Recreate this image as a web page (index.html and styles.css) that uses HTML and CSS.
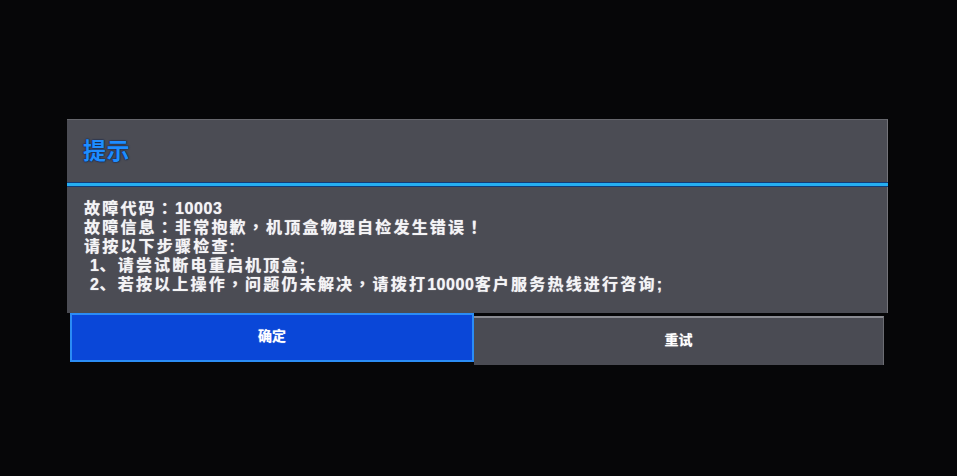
FILE: index.html
```html
<!DOCTYPE html>
<html lang="zh-CN">
<head>
<meta charset="utf-8">
<title>提示</title>
<link rel="stylesheet" href="styles.css">
</head>
<body>
<div class="dialog">
  <div class="title">提示</div>
  <div class="rule"></div>
  <div class="content">
    <div class="line">故障代码<span class="p" lang="zh-TW">：</span><span class="num">10003</span></div>
    <div class="line">故障信息<span class="p" lang="zh-TW">：</span>非常抱歉<span class="p" lang="zh-TW">，</span>机顶盒物理自检发生错误<span class="p" lang="zh-TW">！</span></div>
    <div class="line">请按以下步骤检查:</div>
    <div class="line indent"><span class="num">1</span>、请尝试断电重启机顶盒;</div>
    <div class="line indent"><span class="num">2</span>、若按以上操作<span class="p" lang="zh-TW">，</span>问题仍未解决<span class="p" lang="zh-TW">，</span>请拨打<span class="num">10000</span>客户服务热线进行咨询;</div>
  </div>
  <div class="buttons">
    <div class="btn btn-primary">确定</div>
    <div class="btn btn-secondary">重试</div>
  </div>
</div>
</body>
</html>
```
FILE: styles.css
```css
html, body {
  margin: 0;
  padding: 0;
  background: #060608;
  height: 100%;
}
body {
  font-family: "Liberation Sans", "Noto Sans CJK SC", sans-serif;
  overflow: hidden;
}
.dialog {
  margin: 119px 0 0 67px;
  width: 821px;
}
.title {
  height: 63px;
  box-sizing: border-box;
  display: flex;
  align-items: center;
  padding: 0 0 4px 16px;
  font-size: 23px;
  font-weight: 700;
  color: #1f8dff;
  letter-spacing: 0.5px;
  background: #4b4c54;
  border-top: 1px solid #65666c;
  border-right: 1px solid #74747a;
  text-shadow: 0 0 2px #001a4a, 0 0 1px #001a4a;
}
.rule {
  height: 3px;
  background: #25aef2;
  border-top: 1px solid #123c7a;
  border-bottom: 1px solid #123c7a;
}
.content {
  padding: 12px 17px 19px;
  background: #4b4c54;
  border-right: 1px solid #74747a;
  color: #f4f4f6;
  font-size: 16px;
  font-weight: 700;
  line-height: 19px;
  letter-spacing: 2.2px;
  text-shadow: 0 0 1px rgba(255,255,255,0.7);
}
.line {
  height: 19px;
  white-space: nowrap;
}
.indent {
  padding-left: 6px;
}
.p {
  font-family: "Liberation Sans", "Noto Sans CJK TC", sans-serif;
}
.num {
  letter-spacing: 0.6px;
}
.buttons {
  display: flex;
  height: 49px;
  padding: 0 4px 0 3px;
  background: #060608;
}
.btn {
  display: flex;
  align-items: center;
  justify-content: center;
  box-sizing: border-box;
  padding-bottom: 5px;
  color: #ffffff;
  font-size: 14px;
  font-weight: 700;
  text-shadow: 0 0 1px rgba(255,255,255,0.7);
}
.btn-primary {
  width: 404px;
  background: #0a47d8;
  border: 2px solid #2b8cf5;
}
.btn-secondary {
  flex: 1;
  background: #4a4b53;
  border-top: 2px solid #8a8b92;
  border-right: 1px solid #6c6d73;
  margin-top: 3px;
  height: 49px;
}
```
